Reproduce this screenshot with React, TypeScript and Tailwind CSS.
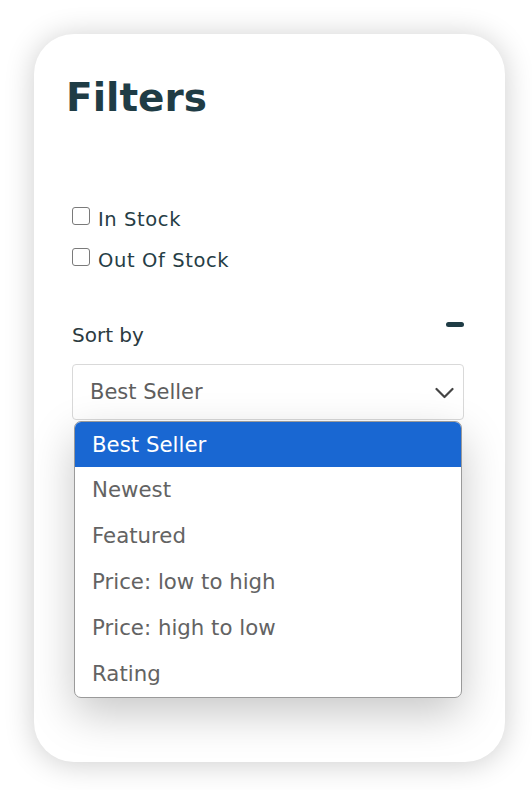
import React from "react";

const options = [
  "Best Seller",
  "Newest",
  "Featured",
  "Price: low to high",
  "Price: high to low",
  "Rating",
];

function Check({ label }: { label: string }) {
  return (
    <div className="flex items-start gap-[8px]">
      <div className="w-[18px] h-[18px] rounded-[3px] border-[1.5px] border-[#7a7a7a] bg-white shrink-0" />
      <span className="mt-[0px] text-[19.5px] leading-[25px] tracking-[0.6px] text-[#263d45]">
        {label}
      </span>
    </div>
  );
}

export default function App() {
  return (
    <div
      className="w-[532px] h-[790px] bg-white overflow-hidden pt-[34px] pl-[34px]"
      style={{ fontFamily: '"DejaVu Sans", sans-serif' }}
    >
      <div className="relative w-[471px] h-[728px] rounded-[40px] bg-white shadow-[0_2px_30px_rgba(0,0,0,0.2)] pt-[40px] pl-[32px] pr-[41px]">
        <h1 className="text-[39px] leading-[48px] font-bold text-[#1f3c45]">
          Filters
        </h1>
        <div className="pl-[6px]">
          <div className="mt-[85px] flex flex-col gap-[16px]">
            <Check label="In Stock" />
            <Check label="Out Of Stock" />
          </div>
          <div className="mt-[50px] flex items-start justify-between">
            <span className="text-[20px] leading-[24px] text-[#2b3a40]">Sort by</span>
            <div className="mt-[-1px] w-[18px] h-[5px] rounded-full bg-[#1f3c45]" />
          </div>
          <div className="relative mt-[17px]">
            <div className="h-[56px] rounded-[4px] border border-[#d9d9d9] bg-white flex items-center justify-between pl-[17px] pr-[9px]">
              <span className="text-[21px] leading-[26px] text-[#5e5e5e]">Best Seller</span>
              <svg width="19" height="12" viewBox="0 0 19 12" className="mt-[1px]">
                <polyline
                  points="1.5,2 9.5,10 17.5,2"
                  fill="none"
                  stroke="#444"
                  strokeWidth="2.2"
                  strokeLinecap="round"
                  strokeLinejoin="round"
                />
              </svg>
            </div>
            <div className="absolute left-[2px] right-[2px] top-[57px] rounded-[7px] border border-[#9a9a9a] bg-white overflow-hidden shadow-[0_16px_44px_rgba(0,0,0,0.22)]">
              {options.map((o, i) => (
                <div
                  key={o}
                  className={
                    i === 0
                      ? "h-[45px] pl-[17px] text-[21.3px] leading-[45px] bg-[#1967d2] text-white"
                      : "h-[46px] pl-[17px] text-[21.3px] leading-[46px] text-[#636363]"
                  }
                >
                  {o}
                </div>
              ))}
            </div>
          </div>
        </div>
      </div>
    </div>
  );
}
